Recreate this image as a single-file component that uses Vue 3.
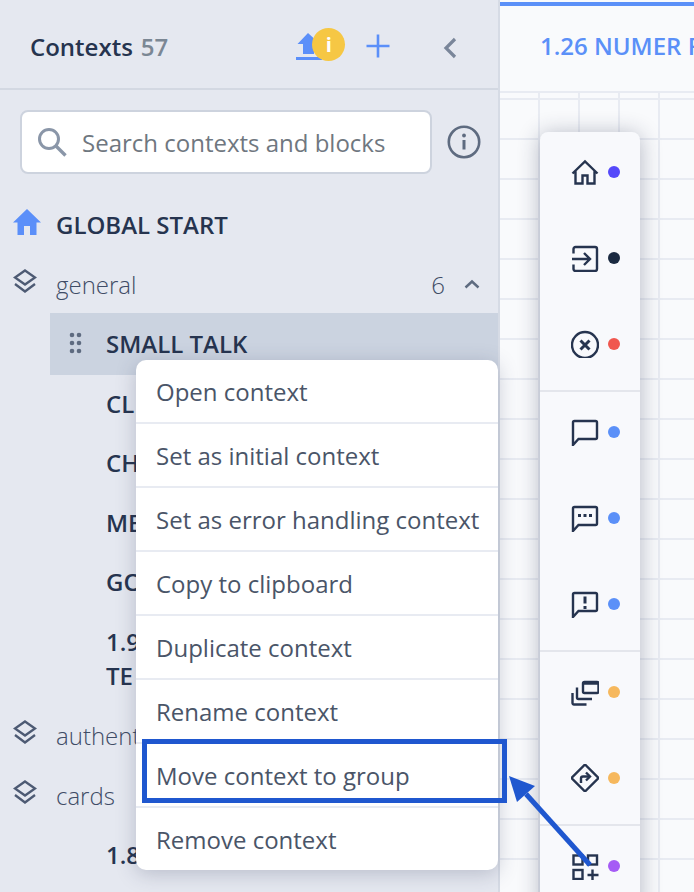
<script setup>
const contexts = [
  { id: 'a', lines: ['SMALL TALK'], active: true },
  { id: 'b', lines: ['CL'] },
  { id: 'c', lines: ['CH'] },
  { id: 'd', lines: ['ME'] },
  { id: 'e', lines: ['GO'] },
  { id: 'f', lines: ['1.9', 'TE'] },
]
const menu = [
  'Open context',
  'Set as initial context',
  'Set as error handling context',
  'Copy to clipboard',
  'Duplicate context',
  'Rename context',
  'Move context to group',
  'Remove context',
]
const toolGroups = [
  [
    { k: 'home', c: '#5549fa' },
    { k: 'login', c: '#1b2a41' },
    { k: 'cross', c: '#f0574f' },
  ],
  [
    { k: 'chat', c: '#5b90f8' },
    { k: 'dots', c: '#5b90f8' },
    { k: 'alert', c: '#5b90f8' },
  ],
  [
    { k: 'stack', c: '#f6b85d' },
    { k: 'route', c: '#f6b85d' },
  ],
  [{ k: 'blocks', c: '#a55bf5' }],
]
const chat = 'M2 27V4.5A1.5 1.5 0 0 1 3.5 3h21A1.5 1.5 0 0 1 26 4.5v15a1.5 1.5 0 0 1-1.5 1.5H7.5z'
</script>

<template>
  <div class="page">
    <aside class="side">
      <header class="head">
        <span class="title">Contexts</span>
        <span class="count">57</span>
        <span class="upload">
          <svg width="26" height="28" viewBox="0 0 26 28"><path d="M12 1 1.500 12H7v10h11V12h6z" fill="#5b8ff9" /><rect y="25" width="26" height="3" fill="#5b8ff9" /></svg>
          <span class="badge">i</span>
        </span>
        <svg class="plus" width="26" height="26" viewBox="0 0 26 26"><path d="M13 1.500v23M1.500 13h23" stroke="#5b8ff9" stroke-width="2.600" fill="none" /></svg>
        <svg class="back" width="16" height="22" viewBox="0 0 16 22"><path d="M13 2 4 11l9 9" stroke="#7a869a" stroke-width="3.200" fill="none" /></svg>
      </header>

      <div class="search-row">
        <div class="search">
          <svg width="30" height="30" viewBox="0 0 30 30"><circle cx="12" cy="12" r="9.500" stroke="#8a96a8" stroke-width="3" fill="none" /><path d="m19 19 9.500 9.500" stroke="#8a96a8" stroke-width="3.400" fill="none" /></svg>
          <span class="placeholder">Search contexts and blocks</span>
        </div>
        <svg width="34" height="34" viewBox="0 0 34 34"><circle cx="17" cy="17" r="15.200" stroke="#5e6b80" stroke-width="2.600" fill="none" /><circle cx="17" cy="10.500" r="1.900" fill="#5e6b80" /><path d="M17 15v9.500" stroke="#5e6b80" stroke-width="3" /></svg>
      </div>

      <div class="row start">
        <svg class="home" width="28" height="26" viewBox="0 0 28 26"><path d="M14 0 28 13.500H23.500V26H17V17H11V26H4.500V13.500H0z" fill="#5b8ff9" /></svg>
        <span class="strong">GLOBAL START</span>
      </div>

      <div class="row group">
        <svg class="layers" width="24" height="24" viewBox="0 0 24 24"><path d="M12 1.500 22 8.500 12 15.500 2 8.500z M2 15l10 7.500L22 15" stroke="#4d5a73" stroke-width="2.300" fill="none" /></svg>
        <span class="group-name">general</span>
        <span class="group-count">6</span>
        <svg width="16" height="10" viewBox="0 0 16 10"><path d="m1.500 8.500 6.500-6 6.500 6" stroke="#5e6b80" stroke-width="2.400" fill="none" /></svg>
      </div>

      <div v-for="c in contexts" :key="c.id" class="ctx" :class="{ active: c.active }">
        <svg v-if="c.active" class="grip" width="13" height="22" viewBox="0 0 13 22"><g fill="#5e6b80"><circle cx="3" cy="3" r="2.300" /><circle cx="10" cy="3" r="2.300" /><circle cx="3" cy="11" r="2.300" /><circle cx="10" cy="11" r="2.300" /><circle cx="3" cy="19" r="2.300" /><circle cx="10" cy="19" r="2.300" /></g></svg>
        <span class="strong ctx-text"><span v-for="l in c.lines" :key="l" class="line">{{ l }}</span></span>
      </div>

      <div class="row group">
        <svg class="layers" width="24" height="24" viewBox="0 0 24 24"><path d="M12 1.500 22 8.500 12 15.500 2 8.500z M2 15l10 7.500L22 15" stroke="#4d5a73" stroke-width="2.300" fill="none" /></svg>
        <span class="group-name">authent</span>
      </div>
      <div class="row group">
        <svg class="layers" width="24" height="24" viewBox="0 0 24 24"><path d="M12 1.500 22 8.500 12 15.500 2 8.500z M2 15l10 7.500L22 15" stroke="#4d5a73" stroke-width="2.300" fill="none" /></svg>
        <span class="group-name">cards</span>
      </div>
      <div class="ctx"><span class="strong ctx-text"><span class="line">1.8</span></span></div>
    </aside>

    <main class="canvas">
      <div class="tabs"><span class="tab">1.26 NUMER F</span></div>
      <div class="grid">
        <div class="tools">
          <div v-for="(g, i) in toolGroups" :key="i" class="tool-group">
            <div v-for="t in g" :key="t.k" class="tool">
              <svg width="28" height="28" viewBox="0 0 28 28" fill="none" stroke="#26344f" stroke-width="2.400">
                <path v-if="t.k === 'home'" d="M1.500 15.500 14 3.500l12.500 12M4.500 13v12.500h7v-8h5v8h7V13" />
                <path v-if="t.k === 'login'" d="M2.500 9.500V5a2 2 0 0 1 2-2H24a2 2 0 0 1 2 2v20a2 2 0 0 1-2 2H4.500a2 2 0 0 1-2-2v-4.500M1 15h17.500M13 9l6 6-6 6" />
                <template v-if="t.k === 'cross'">
                  <circle cx="14" cy="15" r="13" />
                  <path d="m9.500 10.500 9 9m0-9-9 9" stroke-width="3" />
                </template>
                <path v-if="t.k === 'chat' || t.k === 'dots' || t.k === 'alert'" :d="chat" />
                <path v-if="t.k === 'dots'" d="M7 11.500h3m2.500 0h3m2.500 0h3" stroke-width="3" />
                <path v-if="t.k === 'alert'" d="M14 6.500v7m0 2.500v3" stroke-width="3" />
                <template v-if="t.k === 'stack'">
                  <rect x="12" y="4" width="15.500" height="11" rx="1.500" />
                  <path d="M12 5h15.500" stroke-width="3.500" />
                  <path d="M21 21H7.500a1.500 1.500 0 0 1-1.500-1.500V9.500" />
                  <path d="M15.500 26.500H3a1.500 1.500 0 0 1-1.500-1.500V15" />
                </template>
                <template v-if="t.k === 'route'">
                  <path d="M14 .5 27.500 14 14 27.500.5 14z" stroke-linejoin="round" />
                  <path d="M10 19v-4.500a2 2 0 0 1 2-2h6.500" />
                  <path d="m15 8.500 4 4-4 4" />
                </template>
                <template v-if="t.k === 'blocks'">
                  <rect x="2.500" y="3.500" width="9" height="9" />
                  <rect x="17" y="3.500" width="9" height="9" />
                  <rect x="2.500" y="18" width="9" height="9" />
                  <path d="M21.500 17.500v11M16.500 23h11" />
                </template>
              </svg>
              <span class="dot" :style="{ background: t.c }"></span>
            </div>
          </div>
        </div>
      </div>
    </main>

    <div class="menu">
      <div v-for="m in menu" :key="m" class="menu-item">{{ m }}</div>
    </div>
    <div class="mark"></div>
    <svg class="arrow" width="694" height="892" viewBox="0 0 694 892">
      <path d="M526 794 590 865" stroke="#1f57cf" stroke-width="5" fill="none" />
      <path d="M509 776 535 786 517 802z" fill="#1f57cf" />
    </svg>
  </div>
</template>

<style scoped>
.page {
  position: relative;
  width: 694px;
  height: 892px;
  overflow: hidden;
  display: flex;
  font-family: "Open Sans", "Liberation Sans", sans-serif;
  font-size: 24px;
  color: #26344f;
}
.side {
  width: 498px;
  flex: none;
  box-sizing: content-box;
  border-right: 2px solid #d6dbe5;
  background: #e5e8f0;
}
.head {
  box-sizing: border-box;
  height: 90px;
  padding: 4px 0 0 30px;
  border-bottom: 2px solid #d3d8e2;
  display: flex;
  align-items: center;
}
.title {
  font-weight: 600;
}
.count {
  margin-left: 8px;
  font-weight: 600;
  color: #7b8794;
}
.upload {
  position: relative;
  margin-left: 128px;
  width: 26px;
  height: 28px;
  margin-top: -1px;
  display: flex;
}
.badge {
  position: absolute;
  left: 16px;
  top: -4px;
  width: 33px;
  height: 33px;
  border-radius: 50%;
  background: #f6c744;
  color: #fff;
  font-size: 20px;
  font-weight: 700;
  line-height: 33px;
  text-align: center;
}
.plus {
  margin-left: 43px;
}
.back {
  margin: 4px 0 0 51px;
}
.search-row {
  display: flex;
  align-items: center;
  padding: 20px 0 0 20px;
  gap: 15px;
}
.search {
  box-sizing: border-box;
  width: 412px;
  height: 64px;
  background: #fff;
  border: 2px solid #cdd3de;
  border-radius: 8px;
  display: flex;
  align-items: center;
  padding-left: 15px;
  gap: 15px;
}
.placeholder {
  color: #6f7780;
}
.row {
  display: flex;
  align-items: center;
  height: 59.6px;
}
.start {
  margin-top: 21px;
  padding-left: 13px;
}
.home {
  margin: -5px 15px 0 0;
}
.strong {
  font-weight: 600;
  color: #26344f;
}
.group {
  padding-left: 13px;
}
.layers {
  margin: -7px 19px 0 0;
}
.group-name {
  font-weight: 300;
  color: #3f4c66;
  white-space: nowrap;
}
.group-count {
  margin-left: auto;
  margin-right: 19px;
  font-weight: 300;
  color: #3f4c66;
}
.group svg:last-child:not(.layers) {
  margin-right: 18px;
}
.ctx {
  margin-left: 50px;
  padding: 12.8px 0 12.8px 56px;
  display: flex;
  align-items: center;
  position: relative;
}
.ctx.active {
  margin-top: -1px;
  margin-bottom: -1px;
  padding-top: 13.8px;
  padding-bottom: 13.8px;
  background: #cbd3e0;
}
.grip {
  position: absolute;
  left: 19px;
  top: 19px;
}
.ctx-text {
  display: flex;
  flex-direction: column;
  line-height: 34px;
  white-space: nowrap;
}
.canvas {
  flex: 1;
  min-width: 0;
  display: flex;
  flex-direction: column;
  background: #f9fafc;
}
.tabs {
  height: 79px;
  padding: 0 0 6px 40px;
  margin-top: 2px;
  border-top: 4px solid #5b90f8;
  display: flex;
  align-items: center;
  white-space: nowrap;
  overflow: hidden;
}
.tab {
  font-weight: 600;
  color: #5b90f8;
}
.grid {
  flex: 1;
  position: relative;
  border-top: 2px solid #e8ebf2;
  background-image:
    linear-gradient(#e8ebf2 2px, transparent 2px),
    linear-gradient(90deg, #e8ebf2 2px, transparent 2px);
  background-size: 40px 40px;
  background-position: 38px 5px;
}
.tools {
  position: absolute;
  left: 40px;
  top: 39px;
  width: 100px;
  height: 780px;
  background: #f8f9fc;
  border-radius: 8px 8px 0 0;
  box-shadow: 0 2px 22px rgba(30, 40, 70, 0.32);
}
.tool-group {
  padding: 20px 0 26px;
  border-bottom: 2px solid #e4e6ec;
  display: flex;
  flex-direction: column;
  gap: 46px;
}
.tool-group:last-child {
  border-bottom: 0;
}
.tool {
  height: 40px;
  display: flex;
  align-items: center;
  padding-left: 31px;
  gap: 9px;
}
.dot {
  width: 12px;
  height: 12px;
  border-radius: 50%;
}
.menu {
  position: absolute;
  left: 136px;
  top: 360px;
  width: 362px;
  background: #fff;
  border-radius: 10px;
  box-shadow: 0 4px 20px rgba(50, 60, 90, 0.25);
}
.menu-item {
  box-sizing: border-box;
  height: 64px;
  padding: 0 20px;
  line-height: 64px;
  color: #4a5568;
  border-bottom: 2px solid #e8ebf2;
  white-space: nowrap;
}
.menu-item:last-child {
  height: 62px;
  border-bottom: 0;
}
.mark {
  position: absolute;
  left: 142px;
  top: 739px;
  width: 365px;
  height: 64px;
  box-sizing: border-box;
  border: 5px solid #1f57cf;
}
.arrow {
  position: absolute;
  left: 0;
  top: 0;
  pointer-events: none;
}
</style>
